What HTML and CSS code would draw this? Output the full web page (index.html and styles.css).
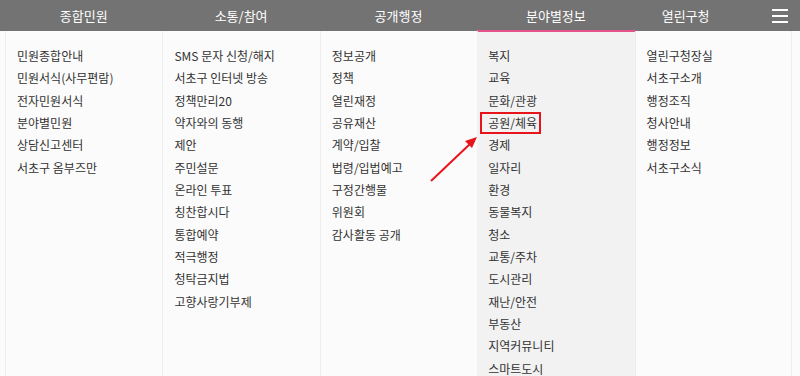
FILE: index.html
```html
<!DOCTYPE html>
<html>
  <head>
    <title>전체메뉴</title>
    <link rel="stylesheet" href="styles.css">
  </head>
  <body>
    <div id="gnb">
      <div class="gnbItem">종합민원</div>
      <div class="gnbItem">소통/참여</div>
      <div class="gnbItem">공개행정</div>
      <div class="gnbItem active">분야별정보</div>
      <div class="gnbItem gnbLast">
        <span class="gnbLabel">열린구청</span>
        <span class="menuBtn"><i></i><i></i><i></i></span>
      </div>
    </div>
    <div id="allMenu">
      <ul class="col">
        <li>민원종합안내</li>
        <li>민원서식(사무편람)</li>
        <li>전자민원서식</li>
        <li>분야별민원</li>
        <li>상담신고센터</li>
        <li>서초구 옴부즈만</li>
      </ul>
      <ul class="col">
        <li>SMS 문자 신청/해지</li>
        <li>서초구 인터넷 방송</li>
        <li>정책만리20</li>
        <li>약자와의 동행</li>
        <li>제안</li>
        <li>주민설문</li>
        <li>온라인 투표</li>
        <li>칭찬합시다</li>
        <li>통합예약</li>
        <li>적극행정</li>
        <li>청탁금지법</li>
        <li>고향사랑기부제</li>
      </ul>
      <ul class="col">
        <li>정보공개</li>
        <li>정책</li>
        <li>열린재정</li>
        <li>공유재산</li>
        <li>계약/입찰</li>
        <li>법령/입법예고</li>
        <li>구정간행물</li>
        <li>위원회</li>
        <li>감사활동 공개</li>
      </ul>
      <ul class="col current">
        <li>복지</li>
        <li>교육</li>
        <li>문화/관광</li>
        <li>공원/체육</li>
        <li>경제</li>
        <li>일자리</li>
        <li>환경</li>
        <li>동물복지</li>
        <li>청소</li>
        <li>교통/주차</li>
        <li>도시관리</li>
        <li>재난/안전</li>
        <li>부동산</li>
        <li>지역커뮤니티</li>
        <li>스마트도시</li>
      </ul>
      <ul class="col last">
        <li>열린구청장실</li>
        <li>서초구소개</li>
        <li>행정조직</li>
        <li>청사안내</li>
        <li>행정정보</li>
        <li>서초구소식</li>
      </ul>
    </div>
    <!-- annotation over the menu -->
    <svg class="mark" width="130" height="80" viewBox="420 108 130 80">
      <rect x="481" y="113" width="59" height="20" fill="none" stroke="#e8141c" stroke-width="2" />
      <line x1="431" y1="181" x2="471" y2="143" stroke="#e8141c" stroke-width="2" />
      <polygon points="477,137 465,141 472,148" fill="#e8141c" />
    </svg>
  </body>
</html>
```

FILE: styles.css
```css
  body {
    font-family: "Noto Sans CJK KR", "Noto Sans", sans-serif;
    margin: 0;
    padding: 0;
    height: 376px;
    overflow: hidden;
    background: #fbfbfb;
    display: flex;
    flex-direction: column;
    position: relative;
  }

  /* top bar */
  #gnb {
    height: 31px;
    background: #737373;
    display: grid;
    grid-template-columns: repeat(5, 1fr);
    padding: 0 8px 0 5px;
  }

  .gnbItem {
    color: #fff;
    font-size: 13px;
    line-height: 31px;
    text-align: center;
  }

  .gnbLast {
    display: flex;
    align-items: center;
  }

  .gnbLabel {
    width: 102px;
  }

  .menuBtn {
    margin-left: auto;
    margin-right: 4px;
    width: 16px;
    display: flex;
    flex-direction: column;
    gap: 4px;
  }

  .menuBtn i {
    display: block;
    height: 2px;
    background: #fff;
  }

/* menu columns */
#allMenu {
  flex: 1;
  display: grid;
  grid-template-columns: repeat(5, 1fr);
  padding: 0 8px 0 5px;
}

.col {
  list-style: none;
  margin: 0;
  padding: 14px 0 0 11px;
  border-left: 1px solid #ededed;
}

.col.last {
  border-right: 1px solid #ededed;
}

.col.current {
  background: #f2f2f2;
  border-top: 2px solid #e8528a;
  margin-top: -1px;
  padding-top: 13px;
  padding-left: 10px;
  border-left-color: #f2f2f2;
}

.col li {
  font-size: 12px;
  line-height: 22.35px;
  color: #333;
  white-space: nowrap;
}

.mark {
  position: absolute;
  left: 420px;
  top: 108px;
  pointer-events: none;
}
```
